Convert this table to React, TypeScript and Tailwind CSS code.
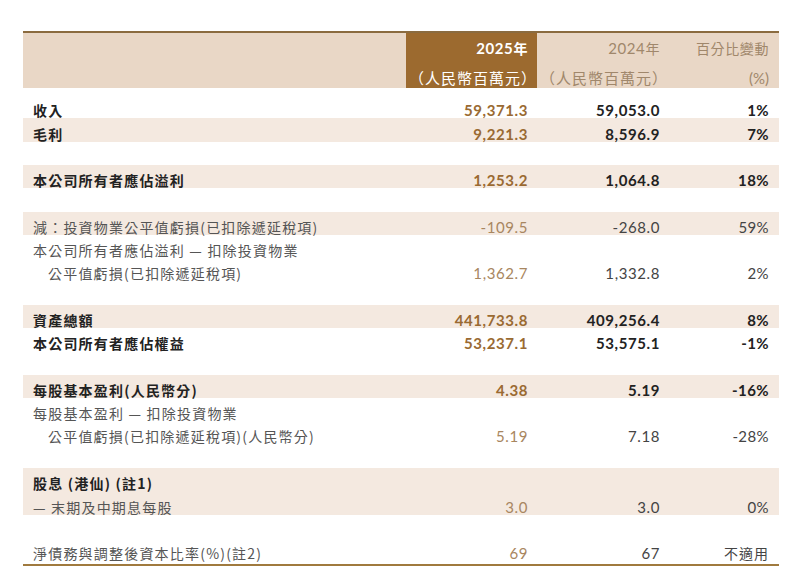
import React from 'react'

type Row =
  | { kind: 'gap'; h?: string }
  | {
      kind: 'row'
      label: string
      band?: boolean
      bold?: boolean
      indent?: boolean
      v25?: string
      v24?: string
      pct?: string
      tall?: boolean
      h?: string
    }

const rows: Row[] = [
  { kind: 'gap', h: 'h-[7px]' },
  { kind: 'row', label: '收入', bold: true, v25: '59,371.3', v24: '59,053.0', pct: '1%' },
  { kind: 'row', label: '毛利', bold: true, band: true, v25: '9,221.3', v24: '8,596.9', pct: '7%', h: 'h-[24px]' },
  { kind: 'gap' },
  { kind: 'row', label: '本公司所有者應佔溢利', bold: true, band: true, v25: '1,253.2', v24: '1,064.8', pct: '18%' },
  { kind: 'gap', h: 'h-[24px]' },
  { kind: 'row', label: '減：投資物業公平值虧損(已扣除遞延稅項)', band: true, v25: '-109.5', v24: '-268.0', pct: '59%' },
  { kind: 'row', label: '本公司所有者應佔溢利 — 扣除投資物業' },
  { kind: 'row', label: '公平值虧損(已扣除遞延稅項)', indent: true, v25: '1,362.7', v24: '1,332.8', pct: '2%' },
  { kind: 'gap', h: 'h-[24px]' },
  { kind: 'row', label: '資產總額', bold: true, band: true, v25: '441,733.8', v24: '409,256.4', pct: '8%' },
  { kind: 'row', label: '本公司所有者應佔權益', bold: true, v25: '53,237.1', v24: '53,575.1', pct: '-1%' },
  { kind: 'gap', h: 'h-[24px]' },
  { kind: 'row', label: '每股基本盈利(人民幣分)', bold: true, band: true, v25: '4.38', v24: '5.19', pct: '-16%' },
  { kind: 'row', label: '每股基本盈利 — 扣除投資物業' },
  { kind: 'row', label: '公平值虧損(已扣除遞延稅項)(人民幣分)', indent: true, v25: '5.19', v24: '7.18', pct: '-28%' },
  { kind: 'gap', h: 'h-[24px]' },
  { kind: 'row', label: '股息 (港仙) (註1)', bold: true, band: true },
  { kind: 'row', label: '— 末期及中期息每股', band: true, v25: '3.0', v24: '3.0', pct: '0%', h: 'h-[24px]' },
  { kind: 'gap', h: 'h-[24px]' },
  { kind: 'row', label: '淨債務與調整後資本比率(%)(註2)', v25: '69', v24: '67', pct: '不適用', tall: true },
]

const cjk = "font-['Noto_Sans_CJK_TC','Noto_Sans',sans-serif]"
const num = "font-['Lato','Noto_Sans_CJK_TC',sans-serif]"
const cols = 'grid grid-cols-[383px_131px_132px_110px]'

export default function App() {
  return (
    <div className="min-h-[583px] w-[803px] bg-white pl-[23px] pt-[31px]">
      <div className="w-[756px]">
        {/* header */}
        <div className={`${cols} border-t-2 border-[#8b6b3f] bg-[#e9d7c6] text-[14px] ${cjk}`}>
          <div />
          <div className="flex flex-col items-end gap-[10px] bg-[#9c6a2f] pt-[5px] text-white">
            <span className={`leading-[20px] pr-[9px] font-bold ${num} text-[15px] tracking-[0.6px]`}>
              2025<span className={`${cjk} text-[14px]`}>年</span>
            </span>
            <span className="leading-[20px] text-[15px] tracking-[1px]">（人民幣百萬元）</span>
          </div>
          <div className="flex flex-col items-end gap-[10px] pt-[5px] text-[#a0876b]">
            <span className={`leading-[20px] pr-[9px] ${num} text-[15px] tracking-[0.6px]`}>
              2024<span className={`${cjk} text-[14px]`}>年</span>
            </span>
            <span className="leading-[20px] pr-[1px] text-[15px] tracking-[1px]">（人民幣百萬元）</span>
          </div>
          <div className="flex flex-col items-end gap-[10px] pr-[10px] pt-[5px] text-[#a0876b]">
            <span className="leading-[20px] tracking-[0.6px]">百分比變動</span>
            <span className={`leading-[20px] ${num} text-[15px]`}>(%)</span>
          </div>
        </div>

        {rows.map((r, i) => {
          if (r.kind === 'gap') return <div key={i} className={r.h ?? 'h-[23px]'} />
          const wt = r.bold ? 'font-bold' : 'font-normal'
          const pb = r.tall ? 'pb-[3px]' : ''
          return (
            <div
              key={i}
              className={`${cols} ${r.tall ? 'h-[27px] border-b-2 border-[#a07a3e]' : r.h ?? 'h-[23px]'} ${r.band ? 'bg-[#f4e9e0]' : ''}`}
            >
              <div
                className={`flex items-end whitespace-nowrap ${pb} ${r.indent ? 'pl-[25px]' : 'pl-[10px]'} ${cjk} text-[14px] leading-[16px] tracking-[1.2px] ${wt} ${r.bold ? 'text-[#222]' : 'text-[#555]'}`}
              >
                {r.label}
              </div>
              <div
                className={`flex items-end justify-end pr-[9px] ${pb} ${num} text-[15px] leading-[16px] tracking-[0.6px] ${wt} ${r.bold ? 'text-[#9a6a32]' : 'text-[#a88660]'}`}
              >
                {r.v25}
              </div>
              <div
                className={`flex items-end justify-end pr-[9px] ${pb} ${num} text-[15px] leading-[16px] tracking-[0.6px] ${wt} ${r.bold ? 'text-[#222]' : 'text-[#444]'}`}
              >
                {r.v24}
              </div>
              <div
                className={`flex items-end justify-end pr-[10px] ${pb} ${r.pct === '不適用' ? `${cjk} text-[14px] tracking-[1px]` : `${num} text-[15px] tracking-[0.4px]`} leading-[16px] ${wt} ${r.bold ? 'text-[#222]' : 'text-[#444]'}`}
              >
                {r.pct}
              </div>
            </div>
          )
        })}
      </div>
    </div>
  )
}
